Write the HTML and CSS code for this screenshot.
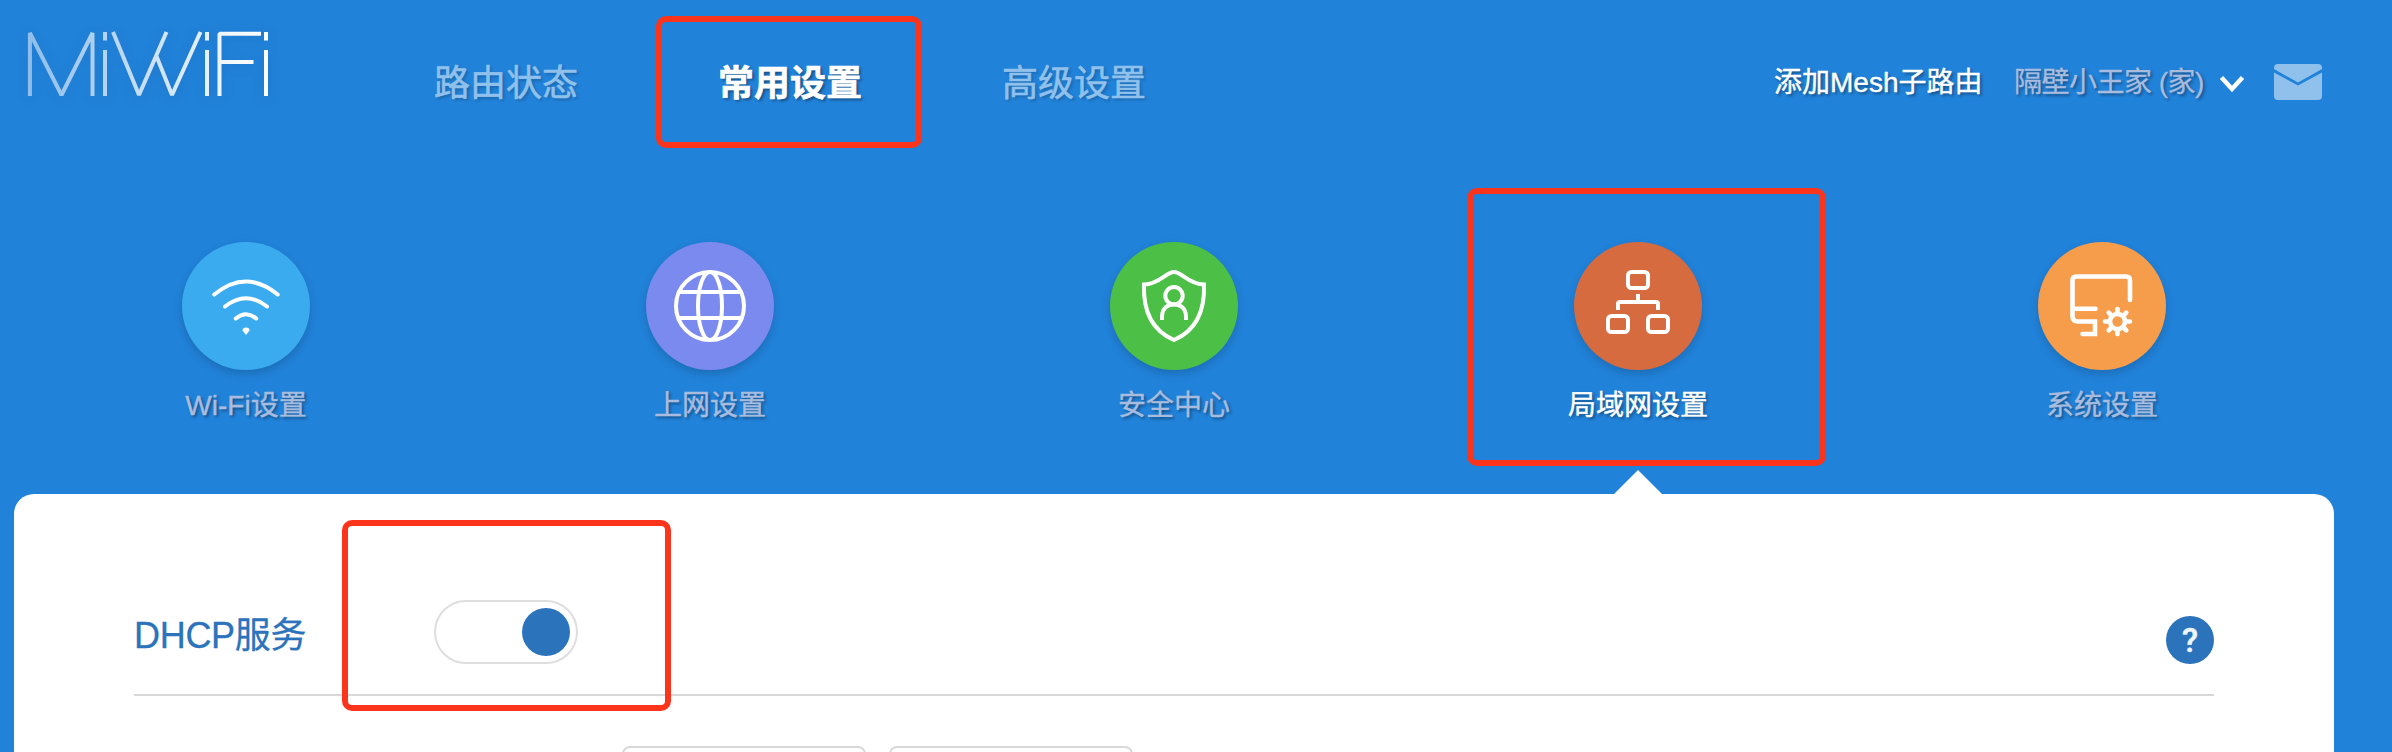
FILE: index.html
```html
<!DOCTYPE html>
<html lang="zh-CN">
<head>
<meta charset="utf-8">
<title>MiWiFi</title>
<link rel="stylesheet" href="styles.css">
</head>
<body>
<div class="page">
  <header class="header">
    <svg class="logo" width="250" height="72" viewBox="0 0 250 72" role="img" aria-label="MiWiFi">
      <defs>
        <linearGradient id="fade" gradientUnits="userSpaceOnUse" x1="0" y1="0" x2="250" y2="0">
          <stop offset="0" stop-color="#fff" stop-opacity=".48"/>
          <stop offset=".85" stop-color="#fff" stop-opacity=".95"/>
          <stop offset="1" stop-color="#fff"/>
        </linearGradient>
      </defs>
      <g fill="none" stroke="url(#fade)" stroke-width="4" stroke-linejoin="bevel">
        <path d="M8.900 68V5L40.500 67L71.500 5V68"/>
        <path d="M84 4V12.500M84.001 22V68"/>
        <path d="M92 4L118 67L145.500 4M135 27L151 67L179.500 4"/>
        <path d="M186 4V12.500M186.001 22V68"/>
        <path d="M198.500 68V5.800H240M198.500 34H232.500"/>
        <path d="M245 4V12.500M245.001 22V68"/>
      </g>
    </svg>
    <nav class="nav">
      <a class="nav-item">路由状态</a>
      <a class="nav-item active">常用设置</a>
      <a class="nav-item">高级设置</a>
    </nav>
    <div class="user">
      <a class="mesh">添加Mesh子路由</a>
      <span class="router-name">隔壁小王家 (家)</span>
      <svg class="chevron" width="26" height="18" viewBox="0 0 26 18"><path d="M2.500 2.500L13 14L23.500 2.500" fill="none" stroke="#fff" stroke-width="4.500"/></svg>
      <svg class="mail" width="48" height="36" viewBox="0 0 48 36"><path d="M4 0H44Q48 0 48 4V5L24 18.500L0 5V4Q0 0 4 0ZM0 8.500L24 21.500L48 8.500V32Q48 36 44 36H4Q0 36 0 32Z" fill="#90c1ec"/></svg>
    </div>
  </header>

  <div class="tabs">
    <a class="tab">
      <span class="disc wifi"><svg viewBox="0 0 128 128" class="glyph"><path d="M32.300 52.500Q64 26.500 95.700 52.500M43 64.500Q64 48 85 64.500M53.800 76.500Q64 68 74.200 76.500"/><path class="solid" d="M60.500 88.500A3.500 3 0 0 1 67.500 88.500L64 93Z"/></svg></span>
      <span class="tab-label">Wi-Fi设置</span>
    </a>
    <a class="tab">
      <span class="disc net"><svg viewBox="0 0 128 128" class="glyph"><circle cx="64" cy="64" r="34"/><ellipse cx="64" cy="64" rx="12" ry="34"/><path d="M33 50H95M33 76H95"/></svg></span>
      <span class="tab-label">上网设置</span>
    </a>
    <a class="tab">
      <span class="disc safe"><svg viewBox="0 0 128 128" class="glyph"><path d="M64 30C56 30 50 42 34 42.500C33 70 43 89 64 98C85 89 95 70 94 42.500C78 42 72 30 64 30Z"/><circle cx="64" cy="53.700" r="8.700"/><path d="M52 78V74.500C52 58 76 58 76 74.500V78" stroke-linecap="butt"/></svg></span>
      <span class="tab-label">安全中心</span>
    </a>
    <a class="tab current">
      <span class="disc lan"><svg viewBox="0 0 128 128" class="glyph"><rect x="54" y="30" width="20" height="16" rx="3.500"/><rect x="34" y="74" width="20" height="16" rx="3.500"/><rect x="74" y="74" width="20" height="16" rx="3.500"/><path d="M64 52V60M44 68V62Q44 60 46 60H82Q84 60 84 62V68" stroke-linecap="butt"/></svg></span>
      <span class="tab-label">局域网设置</span>
    </a>
    <a class="tab">
      <span class="disc sys"><svg viewBox="0 0 128 128" class="glyph bold"><path d="M92 58V38.500Q92 34.500 88 34.500H38.500Q34.500 34.500 34.500 38.500V74Q34.500 79.500 40 79.500H57V92H44.500M34.500 66.800H57.500"/><circle cx="79.500" cy="79.500" r="7.500"/><path d="M79.500 70V67M79.500 89V92M70 79.500H67M89 79.500H92M72.500 72.500L70.700 70.700M86.500 86.500L88.300 88.300M72.500 86.500L70.700 88.300M86.500 72.500L88.300 70.700"/></svg></span>
      <span class="tab-label">系统设置</span>
    </a>
  </div>

  <main class="panel">
    <section class="section-head">
      <h2 class="title">DHCP服务</h2>
      <span class="switch"><span class="knob"></span></span>
      <span class="help">?</span>
    </section>
    <div class="fields">
      <span class="field"></span>
      <span class="field"></span>
    </div>
  </main>

  <div class="mark mark-nav"></div>
  <div class="mark mark-tab"></div>
  <div class="mark mark-switch"></div>
</div>
</body>
</html>
```
FILE: styles.css
```css
* { box-sizing: border-box; }
body {
  margin: 0;
  background: #2182d9;
  font-family: "Liberation Sans", "Noto Sans CJK SC", sans-serif;
}
.page {
  position: relative;
  width: 2392px;
  height: 752px;
  padding: 0 58px 0 14px;
  overflow: hidden;
}
.header {
  display: flex;
  height: 164px;
  padding: 0 12px 0 6px;
}
.logo {
  margin-top: 28px;
  margin-left: 1px;
  filter: drop-shadow(0 2px 6px rgba(0, 50, 110, .18));
}
.nav {
  display: flex;
  gap: 140px;
  margin-left: 163px;
  height: 164px;
  padding-top: 4px;
  align-items: center;
}
.nav-item {
  width: 144px;
  font-size: 36px;
  line-height: 52px;
  white-space: nowrap;
  color: #90c1ec;
  -webkit-text-stroke: .6px currentColor;
  text-shadow: 2px 2px 3px rgba(0, 0, 0, .22);
}
.nav-item.active {
  color: #fff;
  font-weight: 700;
  text-shadow: 2px 2px 3px rgba(0, 0, 0, .4);
}
.user {
  display: flex;
  align-items: center;
  height: 164px;
  margin-left: auto;
  font-size: 28px;
  line-height: 40px;
  white-space: nowrap;
  text-shadow: 2px 2px 3px rgba(0, 0, 0, .4);
}
.mesh {
  width: 210px;
  margin-right: 30px;
  padding-top: 1px;
  color: #fff;
  -webkit-text-stroke: .4px currentColor;
}
.router-name {
  width: 191px;
  padding-top: 1px;
  letter-spacing: -.5px;
  color: #a8bcdf;
  -webkit-text-stroke: .3px currentColor;
}
.chevron { margin: 3px 0 0 14px; }
.mail { margin-left: 29px; }
.tabs {
  display: grid;
  grid-template-columns: repeat(5, 464px);
  height: 330px;
  padding-top: 78px;
}
.tab {
  position: relative;
  display: flex;
  flex-direction: column;
  align-items: center;
}
.disc {
  width: 128px;
  height: 128px;
  border-radius: 50%;
  box-shadow: 0 4px 8px rgba(0, 0, 0, .16);
}
.wifi { background: #3babf0; }
.net { background: #7b8aee; }
.safe { background: #4cbf47; }
.lan { background: #d66b40; }
.sys { background: #f69d4c; }
.glyph {
  display: block;
  fill: none;
  stroke: #fff;
  stroke-width: 4;
  stroke-linecap: round;
}
.bold { stroke-width: 4.6; }
.solid { fill: #fff; stroke: none; }
.tab-label {
  margin-top: 16px;
  font-size: 28px;
  line-height: 40px;
  white-space: nowrap;
  color: #a8bcdf;
  -webkit-text-stroke: .4px currentColor;
  text-shadow: 2px 2px 3px rgba(0, 0, 0, .4);
}
.current .tab-label { color: #fff; }
.current::after {
  content: "";
  position: absolute;
  bottom: 0;
  left: 208px;
  border: 24px solid transparent;
  border-top: 0;
  border-bottom-color: #fff;
}
.panel {
  height: 300px;
  padding: 0 120px;
  background: #fff;
  border-radius: 20px 20px 0 0;
}
.section-head {
  display: flex;
  align-items: flex-end;
  height: 202px;
  padding-bottom: 30px;
  border-bottom: 2px solid #d8d8d8;
}
.title {
  width: 300px;
  margin: 0 0 2px;
  font-size: 36px;
  font-weight: 400;
  line-height: 52px;
  letter-spacing: -.3px;
  color: #2b73bb;
  -webkit-text-stroke: .3px currentColor;
}
.switch {
  display: flex;
  justify-content: flex-end;
  width: 144px;
  height: 64px;
  padding: 6px;
  border: 2px solid #dedede;
  border-radius: 32px;
}
.knob {
  width: 48px;
  height: 48px;
  border-radius: 50%;
  background: #2b73bb;
}
.help {
  width: 48px;
  height: 48px;
  margin-left: auto;
  border-radius: 50%;
  background: #2b73bb;
  color: #eef5fc;
  font: 500 33px/50px Roboto, sans-serif;
  -webkit-text-stroke: .5px currentColor;
  text-align: center;
}
.fields {
  display: flex;
  gap: 23px;
  padding: 50px 0 0 488px;
}
.field {
  width: 244px;
  height: 72px;
  border: 2px solid #d8d8d8;
  border-radius: 8px;
}
/* Highlight frames laid over the page */
.mark {
  position: absolute;
  border: 6px solid #fc341c;
  border-radius: 10px;
}
.mark-nav { left: 656px; top: 16px; width: 266px; height: 132px; }
.mark-tab { left: 1467px; top: 188px; width: 359px; height: 278px; }
.mark-switch { left: 342px; top: 520px; width: 329px; height: 191px; }
```
